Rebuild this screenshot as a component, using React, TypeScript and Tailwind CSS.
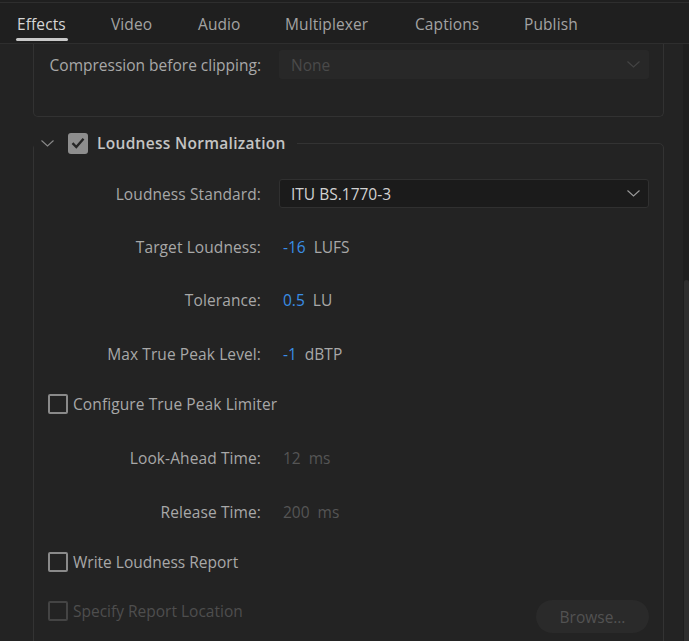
import React from 'react';

const tabs = [
  { label: 'Effects', w: 'w-[94px]' },
  { label: 'Video', w: 'w-[87px]' },
  { label: 'Audio', w: 'w-[87px]' },
  { label: 'Multiplexer', w: 'w-[130px]' },
  { label: 'Captions', w: 'w-[109px]' },
  { label: 'Publish', w: 'w-[80px]' },
];

function Chevron({ className }: { className?: string }) {
  return (
    <svg width="13" height="7" viewBox="0 0 13 7" fill="none" className={className}>
      <path d="M0.5 0.5L6.5 6L12.5 0.5" stroke="currentColor" strokeWidth="1.1" />
    </svg>
  );
}

function Checkbox({ checked = false, disabled = false }: { checked?: boolean; disabled?: boolean }) {
  if (checked) {
    return (
      <span className="w-[20px] h-[21px] shrink-0 rounded-[3px] bg-[#8e8e8e] flex items-center justify-center">
        <svg width="14" height="12" viewBox="0 0 14 12" fill="none">
          <path d="M1.5 6.2L5.3 10L12.5 1.8" stroke="#262626" strokeWidth="2.4" />
        </svg>
      </span>
    );
  }
  return (
    <span
      className={`w-[20px] h-[20px] shrink-0 rounded-[2px] border-2 ${disabled ? 'border-[#444444]' : 'border-[#8a8a8a]'}`}
    />
  );
}

function Row({ label, className, children }: { label: string; className?: string; children: React.ReactNode }) {
  return (
    <div className={`flex items-center ${className ?? ''}`}>
      <span className="w-[227px] shrink-0 text-right text-[#a8a8a8] tracking-[0.1px]">{label}</span>
      {children}
    </div>
  );
}

function Value({ value, unit, disabled = false }: { value: string; unit: string; disabled?: boolean }) {
  return (
    <>
      <span className={`ml-[22px] ${disabled ? 'text-[#555555]' : 'text-[#3a8ee6]'}`}>{value}</span>
      <span className={`ml-[8px] ${disabled ? 'text-[#555555]' : 'text-[#a8a8a8]'}`}>{unit}</span>
    </>
  );
}

export default function App() {
  return (
    <div className="w-[689px] h-[641px] overflow-hidden bg-[#232323] flex flex-col font-['Open_Sans',sans-serif] text-[15.5px] leading-[22px]">
      {/* Tabs */}
      <div className="h-[44px] shrink-0 bg-[#1f1f1f] border-b border-[#2e2e2e] pt-[2px]">
        <div className="h-full border-t border-[#2e2e2e] flex pl-[17px]">
          {tabs.map((t, i) => (
            <div key={t.label} className={`${t.w} shrink-0 flex flex-col items-start pt-[10px]`}>
              <span className={`tracking-[0.1px] ${i === 0 ? 'text-[#d6d6d6]' : 'text-[#a3a3a3]'}`}>{t.label}</span>
              {i === 0 && <div className="mt-[3px] -ml-[1px] h-[3px] w-[52px] rounded-full bg-[#c9c9c9]" />}
            </div>
          ))}
        </div>
      </div>

      <div className="flex-1 flex min-h-0">
        <div className="flex-1 pl-[33px] pr-[19px] overflow-hidden">
          {/* Previous group (scrolled) */}
          <div className="border-x border-b border-[#323232] rounded-b-[5px] pt-[6px] pb-[37px] pr-[14px] flex items-center">
            <span className="w-[227px] shrink-0 text-right text-[#a8a8a8]">Compression before clipping:</span>
            <div className="ml-[18px] flex-1 h-[29px] rounded-[3px] bg-[#282828] flex items-center justify-between pl-[12px] pr-[9px] text-[#4a4a4a]">
              <span>None</span>
              <Chevron className="text-[#444444]" />
            </div>
          </div>

          {/* Loudness Normalization */}
          <fieldset className="mt-[15px] border border-[#333333] rounded-[5px] pr-[14px] pb-[40px]">
            <legend className="flex items-center pl-[7px] pr-[11px]">
              <Chevron className="text-[#8a8a8a]" />
              <span className="ml-[14px]">
                <Checkbox checked />
              </span>
              <span className="ml-[9px] font-semibold tracking-[0.3px] text-[#c4c4c4]">Loudness Normalization</span>
            </legend>

            <Row label="Loudness Standard:" className="mt-[25px]">
              <div className="ml-[18px] flex-1 h-[29px] rounded-[3px] bg-[#1b1b1b] border border-[#303030] flex items-center justify-between pl-[11px] pr-[8px] text-[#d2d2d2]">
                <span>ITU BS.1770-3</span>
                <Chevron className="text-[#9a9a9a]" />
              </div>
            </Row>

            <Row label="Target Loudness:" className="mt-[24px] h-[30px]">
              <Value value="-16" unit="LUFS" />
            </Row>
            <Row label="Tolerance:" className="mt-[23px] h-[30px]">
              <Value value="0.5" unit="LU" />
            </Row>
            <Row label="Max True Peak Level:" className="mt-[24px] h-[30px]">
              <Value value="-1" unit="dBTP" />
            </Row>

            <div className="mt-[25px] h-[20px] pl-[14px] flex items-center">
              <Checkbox />
              <span className="ml-[5px] text-[#a8a8a8] tracking-[0.1px]">Configure True Peak Limiter</span>
            </div>

            <Row label="Look-Ahead Time:" className="mt-[29px] h-[30px]">
              <Value value="12" unit="ms" disabled />
            </Row>
            <Row label="Release Time:" className="mt-[24px] h-[30px]">
              <Value value="200" unit="ms" disabled />
            </Row>

            <div className="mt-[25px] h-[20px] pl-[14px] flex items-center">
              <Checkbox />
              <span className="ml-[5px] text-[#a8a8a8]">Write Loudness Report</span>
            </div>

            <div className="mt-[28px] pl-[14px] flex items-start">
              <div className="h-[21px] flex items-center">
                <Checkbox disabled />
                <span className="ml-[5px] text-[#4e4e4e]">Specify Report Location</span>
              </div>
              <button className="ml-auto w-[113px] h-[33px] rounded-full bg-[#2a2a2a] text-[#525252]">Browse…</button>
            </div>
          </fieldset>
        </div>

        {/* Scrollbar */}
        <div className="w-[6px] shrink-0 bg-[#1e1e1e] flex flex-col pl-[1px] pt-[236px]">
          <div className="flex-1 rounded-t-[3px] bg-[#2e2e2e]" />
        </div>
      </div>
    </div>
  );
}
